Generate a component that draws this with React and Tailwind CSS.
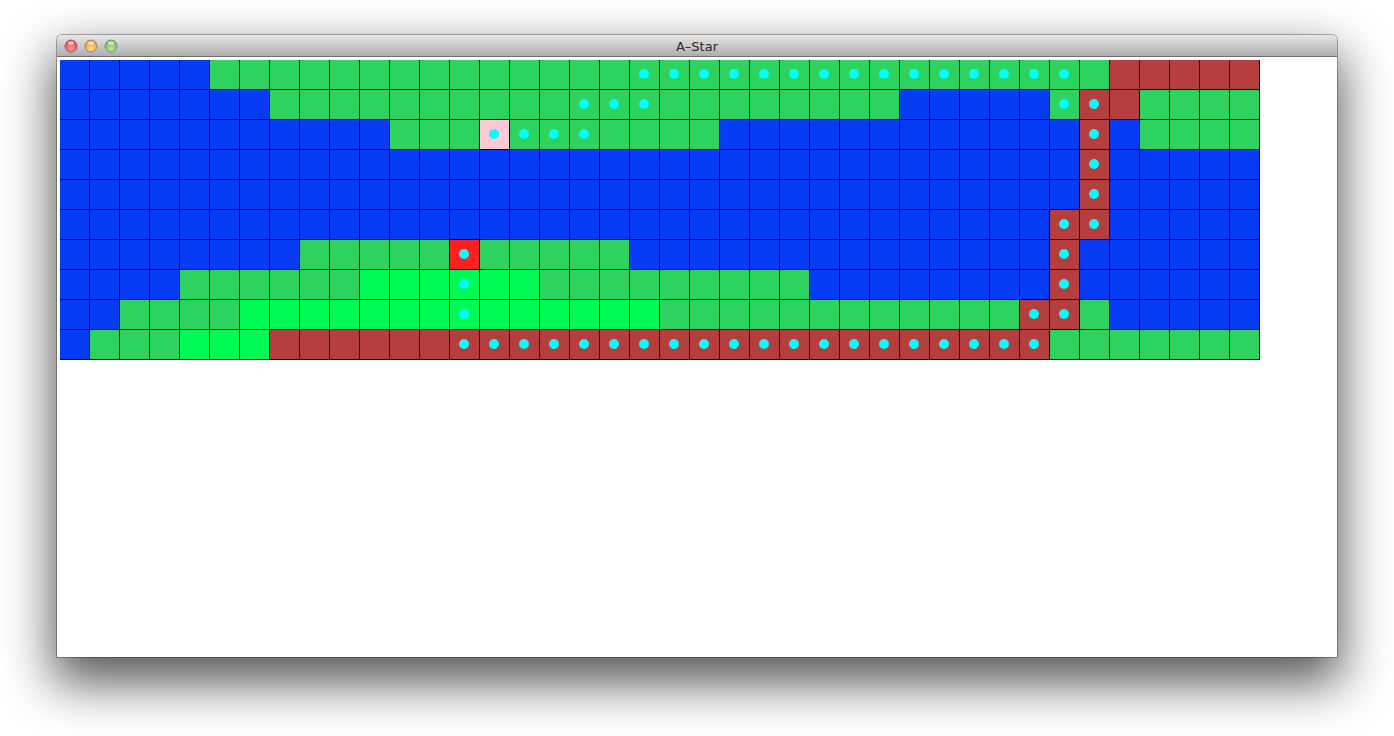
const ROWS = [
  'BBBBBGGGGGGGGGGGGGGGGGGGGGGGGGGGGGGRRRRR',
  'BBBBBBBGGGGGGGGGGGGGGGGGGGGGBBBBBGRRGGGG',
  'BBBBBBBBBBBGGGPGGGGGGGBBBBBBBBBBBBRBGGGG',
  'BBBBBBBBBBBBBBBBBBBBBBBBBBBBBBBBBBRBBBBB',
  'BBBBBBBBBBBBBBBBBBBBBBBBBBBBBBBBBBRBBBBB',
  'BBBBBBBBBBBBBBBBBBBBBBBBBBBBBBBBBRRBBBBB',
  'BBBBBBBBGGGGGXGGGGGBBBBBBBBBBBBBBRBBBBBB',
  'BBBBGGGGGGLLLLLLGGGGGGGGGBBBBBBBBRBBBBBB',
  'BBGGGGLLLLLLLLLLLLLLGGGGGGGGGGGGRRGBBBBB',
  'BGGGLLLRRRRRRRRRRRRRRRRRRRRRRRRRRGGGGGGG',
]

const DOTS = [
  [19, 33],
  [17, 19, 33, 34],
  [14, 17, 34, 34],
  [34, 34],
  [34, 34],
  [33, 34],
  [13, 13, 33, 33],
  [13, 13, 33, 33],
  [13, 13, 32, 33],
  [13, 32],
]

const COLORS = {
  B: 'bg-[#063cf5]',
  G: 'bg-[#2ed25e]',
  R: 'bg-[#b63e3e]',
  L: 'bg-[#00fa55]',
  X: 'bg-[#ff2020]',
  P: 'bg-[#ffc8d2]',
}

function hasDot(row, col) {
  const ranges = DOTS[row]
  for (let i = 0; i < ranges.length; i += 2) {
    if (col >= ranges[i] && col <= ranges[i + 1]) return true
  }
  return false
}

function Light({ id, light, mid, dark }) {
  return (
    <svg width="14" height="14" viewBox="0 0 14 14">
      <defs>
        <radialGradient id={id} cx="50%" cy="75%" r="65%">
          <stop offset="0%" stopColor={light} />
          <stop offset="100%" stopColor={mid} />
        </radialGradient>
      </defs>
      <circle cx="7" cy="7" r="6" fill={`url(#${id})`} stroke={dark} strokeWidth="0.8" />
      <ellipse cx="7" cy="4" rx="3.2" ry="1.8" fill="#fff" opacity="0.6" />
    </svg>
  )
}

export default function App() {
  return (
    <div className="w-[1394px] h-[736px] bg-white pl-[57px] pt-[35px] overflow-hidden">
      <div className="w-[1280px] h-[622px] flex flex-col bg-white rounded-t-[5px] shadow-[0_0_0_1px_rgba(0,0,0,0.3),0_22px_50px_4px_rgba(0,0,0,0.66)]">
        {/* TITLE BAR */}
        <div className="relative h-[22px] shrink-0 flex items-center justify-center rounded-t-[5px] border-b border-[#6e6e6e] bg-gradient-to-b from-[#e8e8e8] to-[#aeaeae]">
          <div className="absolute left-[7px] top-[4px] flex gap-[6px]">
            <Light id="close" light="#ff9a9a" mid="#e2474c" dark="#99484c" />
            <Light id="min" light="#ffdb8f" mid="#e09a3a" dark="#9a7a48" />
            <Light id="zoom" light="#bce89a" mid="#78b268" dark="#688a5e" />
          </div>
          <span className="font-['DejaVu_Sans',sans-serif] text-[13px] text-[#2a2a2a] pt-[2px]">A–Star</span>
        </div>

        {/* GRID */}
        <div className="flex-1 pl-[3px] pt-[3px]">
          <div className="grid grid-cols-[repeat(40,30px)] grid-rows-[repeat(10,30px)] w-[1200px]">
            {ROWS.map((row, r) =>
              row.split('').map((c, i) => (
                <div
                  key={`${r}-${i}`}
                  className={`flex items-center justify-center border-r border-b border-black pr-px pb-px ${COLORS[c]}`}
                >
                  {hasDot(r, i) && <div className="w-[10px] h-[10px] rounded-full bg-[#00ffff]" />}
                </div>
              ))
            )}
          </div>
        </div>
      </div>
    </div>
  )
}
